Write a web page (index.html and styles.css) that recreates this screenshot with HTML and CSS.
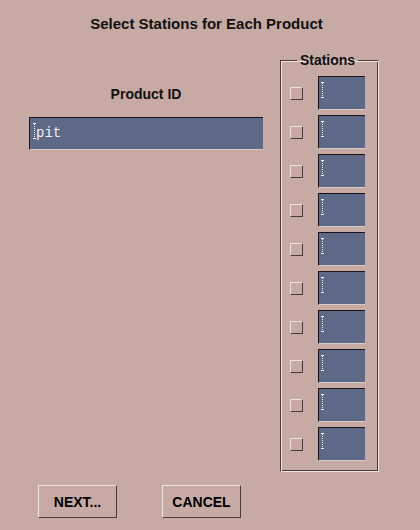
FILE: index.html
```html
<!DOCTYPE html>
<html lang="en">
<head>
    <meta charset="UTF-8">
    <title>Select Stations</title>
    <link rel="stylesheet" href="styles.css">
</head>
<body>
    <h1 class="title">Select Stations for Each Product</h1>

    <div class="main">
        <!-- Product column -->
        <div class="product">
            <div class="label">Product ID</div>
            <div class="field wide"><span class="caret"></span>pit</div>
        </div>

        <!-- Station list -->
        <fieldset class="stations">
            <legend>Stations</legend>
            <div class="row"><span class="check"></span><div class="field small"><span class="caret"></span></div></div>
            <div class="row"><span class="check"></span><div class="field small"><span class="caret"></span></div></div>
            <div class="row"><span class="check"></span><div class="field small"><span class="caret"></span></div></div>
            <div class="row"><span class="check"></span><div class="field small"><span class="caret"></span></div></div>
            <div class="row"><span class="check"></span><div class="field small"><span class="caret"></span></div></div>
            <div class="row"><span class="check"></span><div class="field small"><span class="caret"></span></div></div>
            <div class="row"><span class="check"></span><div class="field small"><span class="caret"></span></div></div>
            <div class="row"><span class="check"></span><div class="field small"><span class="caret"></span></div></div>
            <div class="row"><span class="check"></span><div class="field small"><span class="caret"></span></div></div>
            <div class="row"><span class="check"></span><div class="field small"><span class="caret"></span></div></div>
        </fieldset>
    </div>

    <div class="buttons">
        <button>NEXT...</button>
        <button>CANCEL</button>
    </div>
</body>
</html>
```

FILE: styles.css
```css
/* General styling */
body {
    margin: 0;
    width: 420px;
    height: 530px;
    font-family: "Liberation Sans", Arial, sans-serif;
    background-color: #c7aaa4;
    color: #111;
}

.title {
    margin: 16px 0 0;
    padding-right: 7px;
    font-size: 15px;
    line-height: 16px;
    text-align: center;
    font-weight: bold;
}

.main {
    display: flex;
    align-items: flex-start;
    margin-top: 21px;
}

/* Product column */
.product {
    width: 234px;
    margin-left: 29px;
    padding-top: 33px;
}

.label {
    font-size: 14px;
    font-weight: bold;
    line-height: 16px;
    text-align: center;
    margin-bottom: 15px;
}

.field {
    position: relative;
    background-color: #5d6987;
    border-top: 1px solid #1a1418;
    border-left: 1px solid #1a1418;
    border-bottom: 1px solid #d8ccc8;
    box-sizing: border-box;
}

.wide {
    height: 33px;
    padding-left: 6px;
    font-family: "Liberation Mono", "DejaVu Sans Mono", monospace;
    font-size: 14px;
    line-height: 31px;
    color: #f4f0f0;
}

/* I-beam cursor */
.caret {
    position: absolute;
    left: 3px;
    top: 5px;
    width: 0;
    height: 16px;
    border-left: 1px dotted #f4f0f0;
}

.caret::before,
.caret::after {
    content: "";
    position: absolute;
    left: -2px;
    width: 3px;
    height: 1px;
    background-color: #f4f0f0;
}

.caret::before {
    top: 0;
}

.caret::after {
    bottom: 0;
}

.wide .caret {
    top: 5px;
    left: 4px;
}

/* Stations group, etched frame */
.stations {
    margin: 0 0 0 17px;
    width: 99px;
    box-sizing: border-box;
    padding: 9px 13px 10px 9px;
    border-top: 1px solid #4a3c3c;
    border-left: 1px solid #4a3c3c;
    border-bottom: 1px solid #f0e4e0;
    border-right: 1px solid #f0e4e0;
    box-shadow: inset 1px 1px 0 #f0e4e0, inset -1px -1px 0 #4a3c3c;
}

.stations legend {
    padding: 0 3px;
    margin: 0 auto;
    font-size: 14px;
    font-weight: bold;
    line-height: 14px;
}

.row {
    display: flex;
    align-items: center;
    justify-content: space-between;
    height: 34px;
    margin-top: 5px;
}

.row:first-of-type {
    margin-top: 0;
}

.check {
    width: 13px;
    height: 13px;
    box-sizing: border-box;
    border-top: 1px solid #f0e0dc;
    border-left: 1px solid #f0e0dc;
    border-bottom: 1px solid #4a3c3c;
    border-right: 1px solid #4a3c3c;
}

.small {
    width: 47px;
    height: 34px;
}

/* Buttons */
.buttons {
    display: flex;
    gap: 45px;
    margin: 13px 0 0 38px;
}

button {
    width: 79px;
    height: 33px;
    padding: 0;
    font-family: "Liberation Sans", Arial, sans-serif;
    font-size: 14px;
    font-weight: bold;
    color: #000;
    background-color: transparent;
    border-top: 1px solid #f0e4e0;
    border-left: 1px solid #f0e4e0;
    border-bottom: 1px solid #4a3c3c;
    border-right: 1px solid #4a3c3c;
}
```
